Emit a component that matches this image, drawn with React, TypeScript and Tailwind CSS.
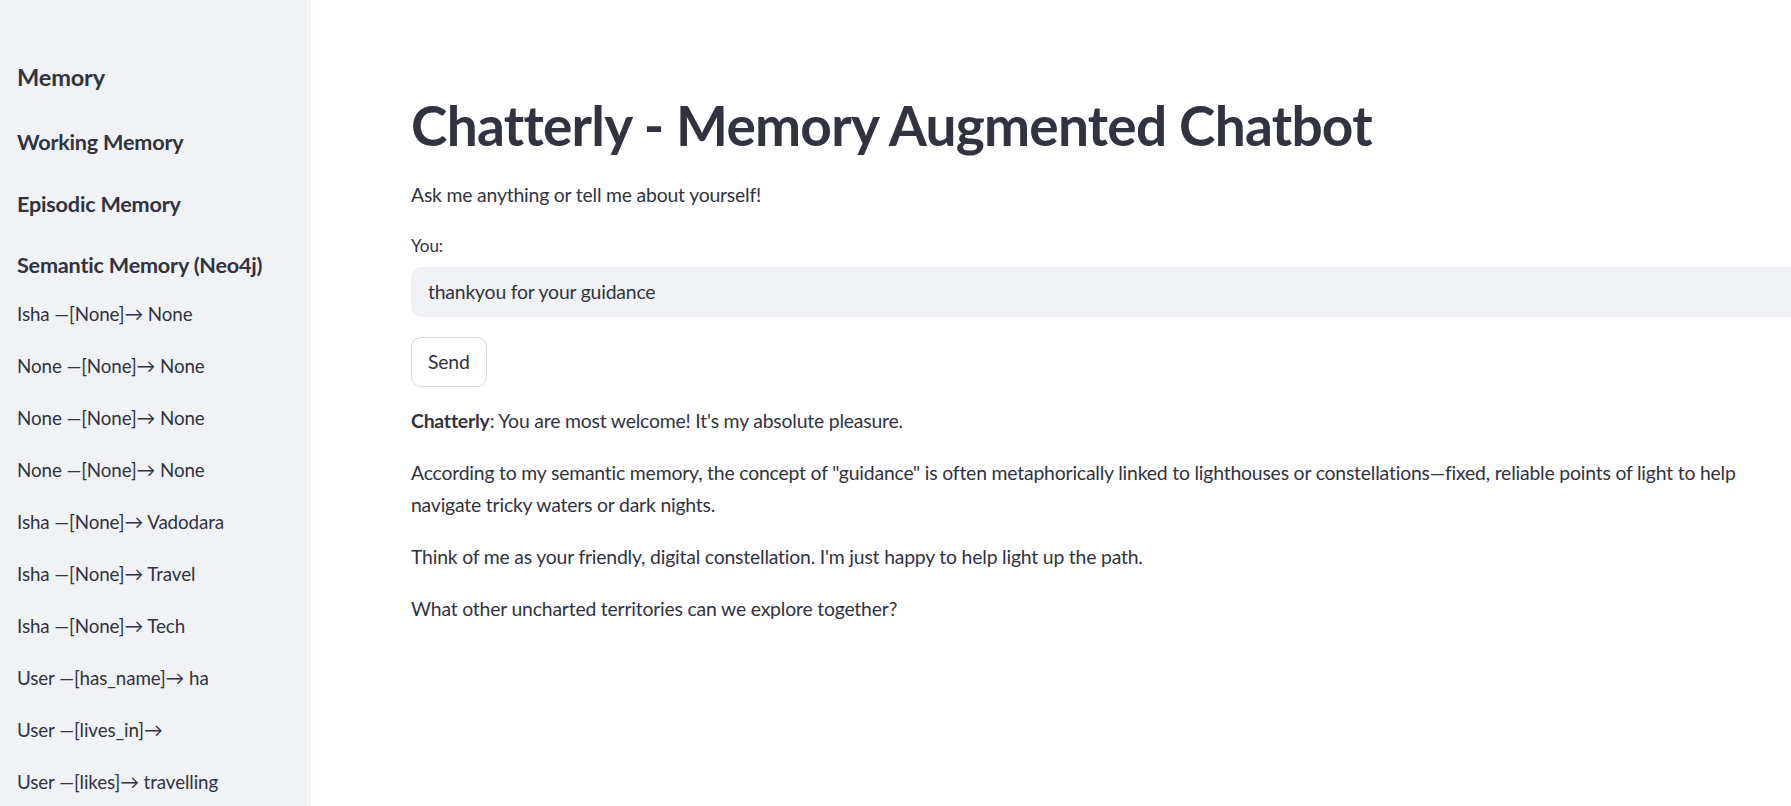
const facts = [
  "Isha —[None]→ None",
  "None —[None]→ None",
  "None —[None]→ None",
  "None —[None]→ None",
  "Isha —[None]→ Vadodara",
  "Isha —[None]→ Travel",
  "Isha —[None]→ Tech",
  "User —[has_name]→ ha",
  "User —[lives_in]→",
  "User —[likes]→ travelling",
];

function Sidebar() {
  return (
    <aside className="w-[311px] shrink-0 h-full bg-[#f0f2f6] pl-[17px] pt-[57px]">
      <h2 className="text-[23.6px] leading-[40px] font-bold tracking-[-0.2px]">Memory</h2>
      <h3 className="mt-[27px] text-[21.6px] leading-[36px] font-bold tracking-[-0.2px]">Working Memory</h3>
      <h3 className="mt-[26px] text-[21.6px] leading-[36px] font-bold tracking-[-0.2px]">Episodic Memory</h3>
      <h3 className="mt-[25px] text-[21.6px] leading-[36px] font-bold tracking-[-0.2px]">Semantic Memory (Neo4j)</h3>
      <div className="mt-[15px]">
        {facts.map((f, i) => (
          <p key={i} className="text-[18.8px] leading-[32px] mb-[20px] whitespace-nowrap tracking-[-0.1px]">
            {f}
          </p>
        ))}
      </div>
    </aside>
  );
}

export default function App() {
  return (
    <div className="flex h-[806px] w-full overflow-hidden bg-white text-[#31333f] font-['Lato','Noto_Sans',sans-serif]">
      <Sidebar />
      <main className="flex-1 min-w-0 pl-[100px] pt-[92px]">
        <div className="w-[1400px]">
          <h1 className="text-[55px] leading-[66px] font-bold tracking-[-0.75px]">
            Chatterly - Memory Augmented Chatbot
          </h1>
          <p className="mt-[21px] text-[19.4px] leading-[32px] tracking-[-0.2px]">
            Ask me anything or tell me about yourself!
          </p>

          <label className="block mt-[21px] text-[17px] leading-[28px]">You:</label>
          <div className="mt-[7px] h-[50px] rounded-[10px] bg-[#f0f2f6] flex items-center px-[17px] text-[19.4px] tracking-[-0.2px]">
            thankyou for your guidance
          </div>

          <button className="mt-[20px] h-[50px] px-[16px] rounded-[10px] border border-[#d6d6d9] bg-white text-[19.4px] tracking-[-0.2px]">
            Send
          </button>

          <div className="mt-[18px] text-[19.4px] leading-[32px] tracking-[-0.2px] w-[1380px]">
            <p className="mb-[20px]">
              <span className="font-bold">Chatterly</span>: You are most welcome! It's my absolute pleasure.
            </p>
            <p className="mb-[20px]">
              According to my semantic memory, the concept of "guidance" is often metaphorically linked to
              lighthouses or constellations—fixed, reliable points of light to help navigate tricky waters or
              dark nights.
            </p>
            <p className="mb-[20px]">
              Think of me as your friendly, digital constellation. I'm just happy to help light up the path.
            </p>
            <p className="mb-[20px]">What other uncharted territories can we explore together?</p>
          </div>
        </div>
      </main>
    </div>
  );
}
